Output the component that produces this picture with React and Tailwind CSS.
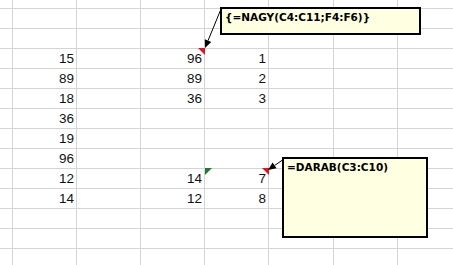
import React from 'react';

// column widths include the 1px right gridline
const cols = [13, 64, 64, 64, 64, 65, 64, 56];
const rowCount = 14;

// values keyed by "row-col"; row 0 is the partial top row
const values = {
  '3-1': '15', '3-3': '96', '3-4': '1',
  '4-1': '89', '4-3': '89', '4-4': '2',
  '5-1': '18', '5-3': '36', '5-4': '3',
  '6-1': '36',
  '7-1': '19',
  '8-1': '96',
  '9-1': '12', '9-3': '14', '9-4': '7',
  '10-1': '14', '10-3': '12', '10-4': '8',
};

function Cell({ value }) {
  return (
    <div className="border-r border-b border-[#d4d4d4] flex items-end justify-end pr-[2px] pb-[2px] overflow-hidden">
      {value && <span className="text-[13.5px] leading-[15px] text-[#111]">{value}</span>}
    </div>
  );
}

function Arrow({ x1, y1, x2, y2 }) {
  const dx = x2 - x1;
  const dy = y2 - y1;
  const len = Math.hypot(dx, dy);
  const ux = dx / len;
  const uy = dy / len;
  const bx = x2 - ux * 8;
  const by = y2 - uy * 8;
  const px = -uy * 3.5;
  const py = ux * 3.5;
  return (
    <g>
      <line x1={x1} y1={y1} x2={bx} y2={by} stroke="#000" strokeWidth="1" />
      <polygon points={`${x2},${y2} ${bx + px},${by + py} ${bx - px},${by - py}`} fill="#000" />
    </g>
  );
}

export default function App() {
  const cells = [];
  for (let r = 0; r < rowCount; r++) {
    for (let c = 0; c < cols.length; c++) {
      cells.push(<Cell key={`${r}-${c}`} value={values[`${r}-${c}`]} />);
    }
  }

  return (
    <div
      className="relative w-[453px] h-[265px] overflow-hidden bg-white"
      style={{ fontFamily: '"Liberation Sans", Arial, sans-serif' }}
    >
      <div className="grid grid-cols-[13px_64px_64px_64px_64px_65px_64px_56px] grid-rows-[9px_repeat(12,20px)_30px]">
        {cells}
      </div>

      {/* error / comment indicators */}
      <div className="absolute left-[198px] top-[48px] w-0 h-0 border-t-[7px] border-t-[#e0141e] border-l-[7px] border-l-transparent" />
      <div className="absolute left-[262px] top-[168px] w-0 h-0 border-t-[7px] border-t-[#e0141e] border-l-[7px] border-l-transparent" />
      <div className="absolute left-[205px] top-[168px] w-0 h-0 border-t-[7px] border-t-[#1e7a2e] border-r-[7px] border-r-transparent" />

      <svg className="absolute inset-0 pointer-events-none" width="453" height="265">
        <Arrow x1={221} y1={9} x2={205} y2={48} />
        <Arrow x1={284} y1={159} x2={268} y2={170} />
      </svg>

      {/* comment boxes */}
      <div
        className="absolute left-[220px] top-[7px] w-[201px] h-[28px] bg-[#ffffe1] border-2 border-black pl-[3px] pt-[2px] text-[10.5px] leading-[13px] font-bold text-black"
        style={{ fontFamily: '"DejaVu Sans", Tahoma, sans-serif' }}
      >
        {'{=NAGY(C4:C11;F4:F6)}'}
      </div>
      <div
        className="absolute left-[282px] top-[157px] w-[146px] h-[81px] bg-[#ffffe1] border-2 border-black pl-[3px] pt-[2px] text-[10.5px] leading-[13px] font-bold text-black"
        style={{ fontFamily: '"DejaVu Sans", Tahoma, sans-serif' }}
      >
        =DARAB(C3:C10)
      </div>
    </div>
  );
}
